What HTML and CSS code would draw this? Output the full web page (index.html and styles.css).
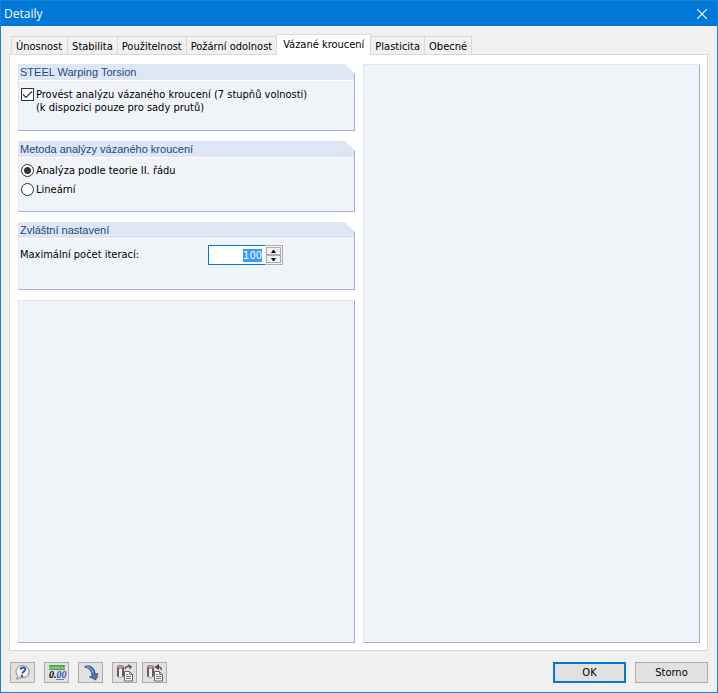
FILE: index.html
```html
<!DOCTYPE html>
<html lang="cs">
  <head>
    <meta charset="UTF-8">
    <meta name="viewport" content="width=device-width, initial-scale=1.0">
    <title>Detaily</title>
    <link rel="stylesheet" href="styles.css">
  </head>
  <body>
    <header class="titlebar">
      <h1>Detaily</h1>
      <button type="button" class="close" aria-label="Zavřít">
        <svg width="10" height="10" viewBox="0 0 10 10"><path d="M0 0L10 10M10 0L0 10" stroke="#fff" stroke-width="1.2"/></svg>
      </button>
    </header>

    <form class="dialog" onsubmit="return false">
      <div class="tabs" role="tablist">
        <button type="button" role="tab">Únosnost</button>
        <button type="button" role="tab">Stabilita</button>
        <button type="button" role="tab">Použitelnost</button>
        <button type="button" role="tab">Požární odolnost</button>
        <button type="button" role="tab" class="active" aria-selected="true">Vázané kroucení</button>
        <button type="button" role="tab">Plasticita</button>
        <button type="button" role="tab">Obecné</button>
      </div>

      <div class="panel">
        <div class="column">
          <section class="group">
            <h2>STEEL Warping Torsion</h2>
            <div class="group-body">
              <label class="option check">
                <input type="checkbox" checked>
                <span>Provést analýzu vázaného kroucení (7 stupňů volnosti)<br>(k dispozici pouze pro sady prutů)</span>
              </label>
            </div>
          </section>

          <section class="group">
            <h2>Metoda analýzy vázaného kroucení</h2>
            <div class="group-body methods">
              <label class="option"><input type="radio" name="method" checked><span>Analýza podle teorie II. řádu</span></label>
              <label class="option"><input type="radio" name="method"><span>Lineární</span></label>
            </div>
          </section>

          <section class="group">
            <h2>Zvláštní nastavení</h2>
            <div class="group-body setting">
              <label for="iterations">Maximální počet iterací:</label>
              <div class="spinner">
                <input type="text" id="iterations" value="100" autocomplete="off">
                <div class="arrows">
                  <button type="button" aria-label="Zvýšit" onclick="step(1)"><svg width="5" height="3" viewBox="0 0 5 3"><path d="M0 3L2 0H3L5 3Z"/></svg></button>
                  <button type="button" aria-label="Snížit" onclick="step(-1)"><svg width="5" height="3" viewBox="0 0 5 3"><path d="M0 0L2 3H3L5 0Z"/></svg></button>
                </div>
              </div>
            </div>
          </section>

          <section class="blank"></section>
        </div>
        <section class="blank"></section>
      </div>

      <footer class="footer">
        <div class="tools">
          <button type="button" aria-label="Nápověda">
            <svg width="20" height="18" viewBox="0 0 20 18">
              <path d="M10 2C5.500 2 3 4.500 3 8C3 10 4 11.500 5 12.500L3.500 16L8 14C13 15 17 12 17 8C17 4.500 14 2 10 2Z" fill="#999" opacity=".6"/>
              <path d="M9.500 1.500C5.500 1.500 3 4.500 3 7.500C3 9.500 4 11 5 12L3.500 15L7.500 13.500C12 14.500 16 11.500 16 7.500C16 4 13 1.500 9.500 1.500Z" fill="#f4f4f4" stroke="#8c8c8c"/>
              <path d="M7.500 5.500Q8 3.500 10 3.500Q12.500 3.500 12.300 5.500C12.100 7.500 9.500 7.500 9.300 9.500" fill="none" stroke="#34539b" stroke-width="1.900"/>
              <circle cx="8.900" cy="12" r="1.200" fill="#34539b"/>
            </svg>
          </button>
          <button type="button" aria-label="Jednotky a desetinná místa">
            <svg width="20" height="18" viewBox="0 0 20 18">
              <rect x="2" y="1" width="16" height="5" fill="#7cc872"/>
              <path d="M2 1.500H18M2 5.500H18" stroke="#4b9c45"/>
              <path d="M4.500 2V3M7.500 2V3M10.500 2V3M13.500 2V3M16.500 2V3" stroke="#398834"/>
              <text x="2" y="14" class="digits">0.<tspan class="blue">00</tspan></text>
              <path d="M9 15.500H17" stroke="#6a7aa8"/>
            </svg>
          </button>
          <button type="button" aria-label="Přenést">
            <svg width="20" height="18" viewBox="0 0 20 18">
              <path d="M5 4Q15 3 16 12L18 12L15 17L9 13L12 12Q11 6 5 4Z" fill="#888" opacity=".6"/>
              <path d="M3.500 3C8 0 14 3 14 10.500L17 9.500L14.500 15.500L8.500 13L11 12C11 7 8 3.500 3.500 3Z" fill="#5274bd" stroke="#263b70" stroke-width=".7"/>
              <path d="M6 2.800Q11 3.500 12.200 9" fill="none" stroke="#a9bae3"/>
            </svg>
          </button>
          <button type="button" aria-label="Načíst výchozí">
            <svg width="20" height="18" viewBox="0 0 20 18">
              <path d="M2 3V12Q5 15 9 12V3Z" fill="#6e5a50"/>
              <path d="M4 3V13L7 13V3Z" fill="#f3eee9"/>
              <ellipse cx="5.500" cy="3" rx="3.500" ry="1.500" fill="#b7a89d" stroke="#62534b" stroke-width=".6"/>
              <path d="M10 5Q11 2 14 2.500" fill="none" stroke="#444" stroke-width="1.300"/>
              <path d="M13 0L17 2.500L15 5.500Z" fill="#555"/>
              <path d="M9.500 7.500H14.500L17.500 10.500V17H9.500Z" fill="#f8f8f8" stroke="#666"/>
              <path d="M14.500 7.500V10.500H17.500M11 10.500H13M11 12.500H16M11 14.500H16" fill="none" stroke="#777"/>
            </svg>
          </button>
          <button type="button" aria-label="Uložit jako výchozí">
            <svg width="20" height="18" viewBox="0 0 20 18">
              <path d="M2 3V12Q5 15 9 12V3Z" fill="#6e5a50"/>
              <path d="M4 3V13L7 13V3Z" fill="#f3eee9"/>
              <ellipse cx="5.500" cy="3" rx="3.500" ry="1.500" fill="#b7a89d" stroke="#62534b" stroke-width=".6"/>
              <path d="M12 3Q16 2 16.500 6" fill="none" stroke="#444" stroke-width="1.300"/>
              <path d="M14 0V6L9.500 3Z" fill="#444"/>
              <path d="M9.500 7.500H14.500L17.500 10.500V17H9.500Z" fill="#f8f8f8" stroke="#666"/>
              <path d="M14.500 7.500V10.500H17.500M11 10.500H13M11 12.500H16M11 14.500H16" fill="none" stroke="#777"/>
            </svg>
          </button>
        </div>
        <div class="actions">
          <button type="submit" class="default">OK</button>
          <button type="button">Storno</button>
        </div>
      </footer>
    </form>

    <script>
      const iterations = document.getElementById("iterations");

      function step(amount) {
        iterations.value = Math.max(1, (parseInt(iterations.value) || 0) + amount);
        iterations.select();
      }

      iterations.focus();
      iterations.select();
    </script>
  </body>
</html>
```
FILE: styles.css
```css
* {
  box-sizing: border-box;
}

body {
  display: flex;
  flex-direction: column;
  min-height: 100vh;
  margin: 0;
  border: 1px solid #1883d7;
  background-color: #f0f0f0;
  color: #000;
  font-family: Tahoma, "DejaVu Sans Condensed", sans-serif;
  font-size: 11px;
  line-height: 13px;
}

button,
input {
  margin: 0;
  padding: 0;
  font: inherit;
  color: inherit;
}

svg {
  display: block;
}

.titlebar {
  display: flex;
  justify-content: space-between;
  align-items: center;
  height: 25px;
  padding: 0 10px 0 3px;
  background-color: #0078d7;
  color: #fff;
}

.titlebar h1 {
  margin: 0;
  font-family: "Segoe UI", "Open Sans", sans-serif;
  font-size: 12px;
  font-weight: normal;
  line-height: 16px;
}

.close {
  border: none;
  background: none;
}

.dialog {
  display: flex;
  flex: 1;
  flex-direction: column;
  padding: 8px 9px 9px 8px;
}

.tabs {
  display: flex;
  align-items: flex-end;
  padding-left: 2px;
}

.tabs button {
  height: 18px;
  padding: 2px 4px 0;
  border: 1px solid #d9d9d9;
  border-width: 1px 1px 0 0;
  background-color: #f0f0f0;
  white-space: nowrap;
}

.tabs button:first-child {
  border-left-width: 1px;
  padding-right: 5px;
}

.tabs .active {
  z-index: 1;
  height: 21px;
  margin: 0 0 -1px -1px;
  padding: 0 6px 2px;
  border-left-width: 1px;
  background-color: #fff;
}

.panel {
  display: grid;
  flex: 1;
  grid-template-columns: 1fr 1fr;
  gap: 8px;
  padding: 9px 7px 7px 8px;
  border: 1px solid #d9d9d9;
  background-color: #fff;
}

.column {
  display: flex;
  flex-direction: column;
  gap: 10px;
}

.group,
.blank {
  border: 1px solid;
  border-color: #dce6f4 #a8a8e8 #a8a8e8 #dce6f4;
  background-color: #f0f3f8;
}

.column .blank {
  flex: 1;
}

.group {
  clip-path: polygon(0 0, calc(100% - 10px) 0, 100% 10px, 100% 100%, 0 100%);
}

.group h2 {
  margin: 0;
  padding-left: 1px;
  border-bottom: 1px solid #fff;
  background-color: #dce6f4;
  color: #1f497d;
  font-family: Arial, "Liberation Sans", sans-serif;
  font-size: 11px;
  font-weight: normal;
  line-height: 15px;
}

.group-body {
  min-height: 49px;
  padding: 7px 2px;
}

.option {
  display: flex;
  align-items: center;
  gap: 2px;
}

.check {
  align-items: flex-start;
}

.option input {
  flex: none;
  width: 13px;
  height: 13px;
  border: 1px solid #333;
  background-color: #fff;
  appearance: none;
}

.option input[type="radio"] {
  border-radius: 50%;
}

.option input[type="radio"]:checked {
  background-image: radial-gradient(circle, #333 3px, transparent 4px);
}

.option input[type="checkbox"]:checked {
  background-image: url("data:image/svg+xml,%3Csvg xmlns='http://www.w3.org/2000/svg' viewBox='0 0 11 11'%3E%3Cpath d='M1 5.500L4 8.500L10 2.500' fill='none' stroke='%23333' stroke-width='1.200'/%3E%3C/svg%3E");
}

.methods {
  display: flex;
  flex-direction: column;
  gap: 6px;
  min-height: 53px;
  padding-top: 6px;
}

.setting {
  display: flex;
  align-items: flex-start;
  min-height: 50px;
  padding-top: 6px;
  padding-left: 1px;
}

.setting label {
  width: 188px;
  line-height: 19px;
}

.spinner {
  display: flex;
  width: 75px;
  height: 20px;
}

.spinner input {
  flex: 1;
  min-width: 0;
  padding-right: 3px;
  border: 1px solid #0078d7;
  border-right: none;
  outline: none;
  background-color: #fff;
  text-align: right;
}

.spinner input::selection {
  background-color: rgba(51, 153, 255, 0.99);
  color: #fff;
}

.arrows {
  display: flex;
  flex-direction: column;
  width: 18px;
  padding: 1px;
  border: 1px solid #acacac;
  border-left: none;
}

.arrows button {
  display: flex;
  flex: 1;
  justify-content: center;
  align-items: center;
  border: 1px solid #acacac;
  background-color: #f0f0f0;
}

.footer {
  display: flex;
  justify-content: space-between;
  padding-top: 11px;
  padding-left: 1px;
}

.tools,
.actions {
  display: flex;
  gap: 9px;
}

.footer button {
  height: 21px;
  border: 1px solid #adadad;
  background-color: #e1e1e1;
}

.tools button {
  display: flex;
  justify-content: center;
  align-items: center;
  width: 25px;
}

.tools button:last-child {
  margin-left: -4px;
}

.actions button {
  width: 73px;
}

.actions .default {
  border: 2px solid #0078d7;
}

.digits {
  font-family: "Liberation Serif", serif;
  font-size: 10px;
  font-style: italic;
  font-weight: bold;
}

.blue {
  fill: #34539b;
}
```
